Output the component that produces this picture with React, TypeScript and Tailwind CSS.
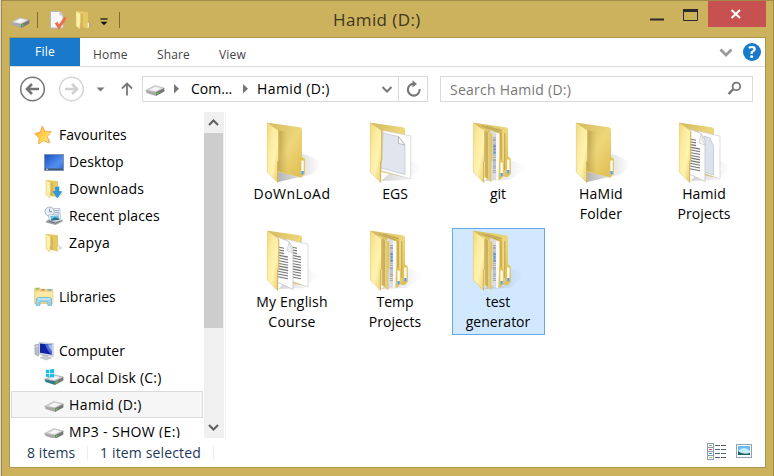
import React from "react";

type FolderKind = "single" | "page" | "nested" | "mixed" | "docs";

function Drive({ windows = false, className = "" }: { windows?: boolean; className?: string }) {
  return (
    <svg viewBox="0 0 20 20" className={`h-5 w-5 shrink-0 ${className}`}>
      <path d="M.6 11.3 L10 6.6 L19.4 9 L11 13.2 Z" fill={windows ? "#b9c9cc" : "#d6d6d4"} stroke="#a5a5a3" strokeWidth=".5" />
      <path d="M.6 11.3 L11 13.2 V17 L1.5 14 Z" fill={windows ? "#357c8b" : "#aaa9a7"} />
      <path d="M11 13.2 L19.4 9 V12.4 L11 17 Z" fill="#777" />
      <path d="M4.5 10.9 L10.5 7.8 L16 9.2 L10.3 12 Z" fill="#f6f6f6" />
      <path d="M11.8 14 l1.8 -.9 v1.7 l-1.8 .9z" fill="#4fd03c" />
      {windows && (
        <path d="M2 2 L5.3 1.6 V5 H2 Z M6 1.5 L10 1 V5 H6 Z M2 5.7 H5.3 V9 L2 8.7 Z M6 5.7 H10 V9.5 L6 9.1 Z" fill="#14bff0" />
      )}
    </svg>
  );
}

function SmallFolder({ download = false }: { download?: boolean }) {
  return (
    <svg viewBox="0 0 20 20" className="h-5 w-5 shrink-0">
      <path d="M14 12 L19 15 L13 18 Z" fill="#999" opacity=".35" />
      <path d="M3 1 L13 2 Q14 2 14 3 V12 L15 12.5 V17 L13.5 18.5 L6 16.5 Z" fill="#e5c864" />
      <path d="M6.5 3.5 L9 4 V17.4 L6 16.5 Z" fill="#b99c46" opacity=".4" />
      <path d="M2 1 L6.5 3.5 V13 L6 13.5 V19 L2 16 Z" fill="#fdeea8" stroke="#dfc169" strokeWidth=".5" />
      {download ? (
        <path d="M11.5 8 H15 V12.5 H17.8 L13.4 19 L9 12.5 H11.5 Z" fill="#2d9ddf" stroke="#1680c5" strokeWidth=".5" />
      ) : (
        <path d="M13.7 13 h1 v4.5 h-1z" fill="#fff" />
      )}
    </svg>
  );
}

function StarIcon() {
  return (
    <svg viewBox="0 0 20 20" className="h-5 w-5 shrink-0">
      <defs>
        <linearGradient id="star" x1="0" y1="0" x2="1" y2="1">
          <stop offset="0" stopColor="#ffa550" />
          <stop offset=".5" stopColor="#ffd048" />
          <stop offset="1" stopColor="#fff08a" />
        </linearGradient>
      </defs>
      <path d="M10 17 L17 18 L15 13 Z" fill="#999" opacity=".4" />
      <path d="M8.2 1 L11 6.2 L17.2 6.8 L13.4 11.5 L15.2 18 L9.6 15.6 L4.6 19 L5 13.2 L.8 8.5 L6.4 7 Z" fill="url(#star)" stroke="#f09a40" strokeWidth=".7" strokeLinejoin="round" />
    </svg>
  );
}

function DesktopIcon() {
  return (
    <svg viewBox="0 0 20 20" className="h-5 w-5 shrink-0">
      <defs>
        <linearGradient id="desk" x1="0" y1="0" x2="1" y2="1">
          <stop offset="0" stopColor="#1550bd" />
          <stop offset=".65" stopColor="#568ff0" />
          <stop offset="1" stopColor="#2968d8" />
        </linearGradient>
      </defs>
      <rect x=".5" y="2.5" width="19" height="16" fill="url(#desk)" stroke="#7f93ad" />
      <path d="M1 16.5h18v1.5H1z" fill="#45566f" />
      <path d="M2 16.8h2v.9H2z" fill="#a9e0ff" />
    </svg>
  );
}

function RecentIcon() {
  return (
    <svg viewBox="0 0 20 20" className="h-5 w-5 shrink-0">
      <path d="M9 2.5 H16 V9 H9 Z" fill="#eef2f7" stroke="#9aabbf" strokeWidth=".6" />
      <path d="M11 4.5h4M11 6.5h4" stroke="#8fa9c8" />
      <circle cx="5.6" cy="5.6" r="4.6" fill="#e8eff7" stroke="#a4b3c5" />
      <path d="M5.6 2.5 V5.8 H8" fill="none" stroke="#637b99" strokeWidth=".8" />
      <path d="M4.5 9 L16 8 L17 15 L5.5 16 Z" fill="#f9fbfc" stroke="#98a6b3" strokeWidth=".6" />
      <path d="M6.2 10 L15 9.2 V12 L6.8 14 Z" fill="#6cc0ea" />
      <path d="M7 13.4 L11 11.2 L15.4 12.5 V14 L7 14.8 Z" fill="#2c6f8a" />
      <path d="M2 15 L5 13.5 L12 16.5 L18.6 13.6 V15.5 L11.5 19 L2 16.6 Z" fill="#9aa1a8" />
      <path d="M4.5 15 L11.5 17.2 L16 15.2" fill="none" stroke="#60686f" strokeWidth=".8" />
    </svg>
  );
}

function LibrariesIcon() {
  return (
    <svg viewBox="0 0 20 20" className="h-5 w-5 shrink-0">
      <path d="M.8 2 Q.8 1 2 1 H6 V2.4 H18.6 V16.5 H.8 Z" fill="#f1d885" stroke="#d3b35c" strokeWidth=".6" />
      <path d="M2 2h2.5" stroke="#42ad50" /><path d="M7.5 3h3" stroke="#ee5b4c" strokeWidth="1.3" /><path d="M13.5 3h4" stroke="#53a5da" strokeWidth="1.3" />
      <path d="M.8 5.2 L2 4.3 H19 V16.5 H.8 Z" fill="#fbe8a3" stroke="#e1c673" strokeWidth=".5" />
      <path d="M2.2 18.4 V13 Q2.2 10.5 5 10.5 H15 Q17.5 10.5 17.5 12.5 V18.4 H13.8 V14.8 H6 V18.4 Z" fill="#9bd5ef" stroke="#60add4" strokeWidth=".7" />
      <path d="M4 12 H16" stroke="#d9f4fc" />
    </svg>
  );
}

function ComputerIcon() {
  return (
    <svg viewBox="0 0 20 20" className="h-5 w-5 shrink-0">
      <path d="M.8 4 L4.5 3 V15 L1 13.5 Z" fill="#b9c0c6" stroke="#858d95" strokeWidth=".5" />
      <path d="M1.8 5.5 L3.8 5" stroke="#fff" strokeWidth=".8" />
      <path d="M8 13 L14 14 V16 L18 17 L12 19 L6 16.7 L9 15.7 Z" fill="#c8cbcf" stroke="#a5a9ad" strokeWidth=".4" />
      <path d="M5 1.5 L19.3 2.6 V15.5 L5 13 Z" fill="#dce1e8" stroke="#a4adbb" strokeWidth=".6" />
      <path d="M6 2.6 L18 3.7 V13.8 L6 11.7 Z" fill="#1222a6" />
      <path d="M11 3.1 L18 3.7 V13.8 Q13 10 11 3.1 Z" fill="#4a6dd6" />
      <path d="M14 3.4 L18 3.7 V10 Q15 8 14 3.4 Z" fill="#9db6f0" />
    </svg>
  );
}

function TextLines({ x }: { x: number }) {
  return (
    <g stroke="#757575" strokeWidth="1.1">
      {Array.from({ length: 12 }, (_, i) => (
        <path key={i} d={`M${x} ${19 + i * 2.7} l${i < 3 ? 6 : 10} ${i < 3 ? 1.2 : 2}`} />
      ))}
    </g>
  );
}

function LabelTab({ x, y }: { x: number; y: number }) {
  return (
    <g transform={`translate(${x} ${y})`}>
      <path d="M-1 -2.5 L3.4 0 V14.5 L0 18.5 H-2 Z" fill="#e3c257" />
      <path d="M.2 1.5 H2.5 V14.5 L.2 16 Z" fill="#fff" />
      <path d="M.2 12 H2.5 V14.8 L.2 16 Z" fill="#559deb" />
    </g>
  );
}

function BigFolder({ kind }: { kind: FolderKind }) {
  const nested = kind === "nested";
  const paper = kind !== "single" && !nested;
  return (
    <svg viewBox="0 0 64 64" className="h-16 w-16 shrink-0">
      <defs>
        <linearGradient id="flap" x1="0" y1="0" x2="1" y2="1">
          <stop offset="0" stopColor="#eed87c" />
          <stop offset=".3" stopColor="#fbeb9f" />
          <stop offset=".6" stopColor="#fff3b0" />
          <stop offset="1" stopColor="#e6c763" />
        </linearGradient>
        <linearGradient id="flap2" x1="0" y1="0" x2="1" y2="0">
          <stop offset="0" stopColor="#b9a04d" />
          <stop offset=".45" stopColor="#f3e08e" />
          <stop offset="1" stopColor="#dcc062" />
        </linearGradient>
        <linearGradient id="back" x1="0" y1="0" x2="1" y2="1">
          <stop offset="0" stopColor="#d3b95c" />
          <stop offset=".5" stopColor="#eed67a" />
          <stop offset="1" stopColor="#debb4b" />
        </linearGradient>
        <linearGradient id="inner">
          <stop offset="0" stopColor="#9e8237" stopOpacity=".55" />
          <stop offset="1" stopColor="#b89b43" stopOpacity="0" />
        </linearGradient>
        <linearGradient id="shade">
          <stop offset="0" stopColor="#777" stopOpacity=".55" />
          <stop offset="1" stopColor="#999" stopOpacity="0" />
        </linearGradient>
      </defs>
      <path d={kind === "single" ? "M42 34 Q52 36 62 43 Q57 54 45 56 L18 62 V51 Z" : "M42 40 Q54 42 59 48 L44 60 L18 61 Z"} fill="url(#shade)" opacity={kind === "single" ? 1 : 0.6} />
      <path d="M8 2.8 L39.5 7.2 Q42 7.6 42 9.5 V36.7 L44.7 39 V54 L41.3 57.3 L18 52 Z" fill="url(#back)" />
      {kind === "single" && (
        <>
          <path d="M18 10 L28 12 V54 L18 51 Z" fill="url(#inner)" />
          <LabelTab x={41.2} y={39} />
        </>
      )}
      {nested && (
        <>
          <path d="M14 5 L35.5 9 V57 L18 55 Z" fill="#d8bf63" />
          <path d="M16 6 L33 12 M20 6 L36 11" stroke="#a99043" strokeWidth=".6" />
          <path d="M24 10 L30.5 12.5 V60 L24 57 Z" fill="#dcdddf" />
          <path d="M30 12.5 L33.7 13.5 V59 L30 60 Z" fill="#f8f8f8" />
          <path d="M28.4 17 V53" stroke="#8f98a4" strokeWidth="3" strokeDasharray="1.2 .9 2 .7 .8 1" opacity=".75" />
          <path d="M28.6 25 V35" stroke="#4d83b0" strokeWidth="2" strokeDasharray="2 1.3" opacity=".8" />
          <path d="M33.7 12 L36.3 13 V57 L33.7 59 Z" fill="#cfae4b" />
          <path d="M36.3 12.5 L38.5 13 V54 L36.3 56 Z" fill="#efd97f" />
          <path d="M38.7 13 V50" stroke="#ad9140" strokeWidth=".7" />
          <LabelTab x={34.3} y={41} />
          <LabelTab x={41} y={38} />
          <path d="M12 5 L26.3 14 V40 L25.3 42 V62.3 L17 56 Z" fill="url(#flap2)" />
          <path d="M19 10 L22 12.3 V59 L19 57 Z" fill="#a88c3b" opacity=".5" />
        </>
      )}
      {paper && (
        <>
          <path d={kind === "page" ? "M20 10.5 L47.8 16 V59 L18 50.5 Z" : "M26 11 L48 16.2 V59 L26 51 Z"} fill="#fff" stroke="#cfcfcf" strokeWidth=".7" />
          {kind === "page" && <path d="M20 13 L35.5 16.5 L42 25 V54.5 L18 48 Z" fill="#e0e5ee" stroke="#b7bcc7" strokeWidth=".6" />}
          {kind === "page" && <path d="M35.5 16.5 V23.5 L42 25 Z" fill="#fafafa" stroke="#999" strokeWidth=".6" />}
          {kind === "mixed" && <path d="M32 16 L38 18 L41.5 26 V55 L32 52 Z" fill="#dce3ed" stroke="#aeb6c5" strokeWidth=".6" />}
          {kind === "docs" && <TextLines x={31} />}
          {kind !== "page" && (
            <>
              <path d="M18 9 L29 13.5 L33 20 V61.5 L17 54 Z" fill="#fdfdfd" stroke="#bcbcbc" strokeWidth=".7" />
              <path d="M29 14 L27 23 L33 25 Z" fill="#f1f1f1" stroke="#bbb" strokeWidth=".5" />
              <TextLines x={18} />
            </>
          )}
        </>
      )}
      <path d="M7.3 2.7 L19 11 V40 L17.8 42 V62.7 L7.3 52 Z" fill="url(#flap)" stroke="#dec16b" strokeWidth=".5" />
      <path d="M18.6 11 V40 L17.5 42 V62" fill="none" stroke="#d1b052" strokeWidth=".8" />
    </svg>
  );
}

const places = [
  { label: "Favourites", icon: <StarIcon />, root: true, track: "" },
  { label: "Desktop", icon: <DesktopIcon />, track: "tracking-[0.1px]" },
  { label: "Downloads", icon: <SmallFolder download />, track: "tracking-[0.25px]" },
  { label: "Recent places", icon: <RecentIcon />, track: "tracking-[0.1px]" },
  { label: "Zapya", icon: <SmallFolder />, track: "tracking-[0.4px]" },
  null,
  { label: "Libraries", icon: <LibrariesIcon />, root: true, track: "" },
  null,
  { label: "Computer", icon: <ComputerIcon />, root: true, track: "" },
  { label: "Local Disk (C:)", icon: <Drive windows />, track: "tracking-[0.2px]" },
  { label: "Hamid (D:)", icon: <Drive />, selected: true, track: "tracking-[0.4px]" },
  { label: "MP3 - SHOW (E:)", icon: <Drive />, track: "tracking-[0.35px]" },
];

const folders: { lines: string[]; kind: FolderKind; selected?: boolean; track?: string }[] = [
  { lines: ["DoWnLoAd"], kind: "single", track: "tracking-[0.45px]" },
  { lines: ["EGS"], kind: "page" },
  { lines: ["git"], kind: "nested" },
  { lines: ["HaMid", "Folder"], kind: "single", track: "tracking-[0.2px]" },
  { lines: ["Hamid", "Projects"], kind: "mixed", track: "tracking-[0.1px]" },
  { lines: ["My English", "Course"], kind: "docs", track: "tracking-[0.2px]" },
  { lines: ["Temp", "Projects"], kind: "nested" },
  { lines: ["test", "generator"], kind: "nested", selected: true },
];

function TitleBar() {
  return (
    <header className="relative flex h-[37px] shrink-0 justify-between">
      <div className="flex h-full items-center pl-px">
        <Drive className="mt-0.5" />
        <i className="ml-[7px] h-4 w-px bg-[#806b31]" />
        <svg viewBox="0 0 20 20" className="ml-[10px] h-5 w-5">
          <path d="M2.5 1.5 H12 L15 5 V18 H2.5 Z" fill="#f8f8f8" stroke="#b3b7bc" />
          <path d="M12 1.5 V5 H15" fill="#ddd" stroke="#aaa" strokeWidth=".7" />
          <path d="M8 12.5 L11 17 L17.5 7.5" fill="none" stroke="#ed7048" strokeWidth="3" />
        </svg>
        <div className="ml-[6px]"><SmallFolder /></div>
        <svg viewBox="0 0 8 8" className="ml-[6px] mt-1 h-2 w-2"><path d="M.5 1h7" stroke="#111" strokeWidth="1.2" /><path d="M.5 3.7h7L4 7.3Z" fill="#111" /></svg>
        <i className="ml-[11px] h-4 w-px bg-[#806b31]" />
      </div>
      <h1 className="absolute left-[324px] top-[6px] whitespace-nowrap text-[17px] leading-[26px] tracking-[0.4px] text-[#3c3621]">Hamid (D:)</h1>
      <div className="flex">
        <svg viewBox="0 0 60 26" className="mr-[-1px] h-[26px] w-[60px]">
          <path d="M1 17.5h14v2H1z" fill="#2b2b2b" />
          <path d="M34.5 8.5h14v11h-14z" fill="none" stroke="#2b2b2b" />
          <path d="M34 8h15v3H34z" fill="#2b2b2b" />
        </svg>
        <button className="grid h-[26px] w-[58px] place-items-center bg-[#c75050]">
          <svg viewBox="0 0 12 10" className="mr-[2px] h-2.5 w-3"><path d="M1.5 1 L10 9 M10 1 L1.5 9" stroke="#fff" strokeWidth="2.1" /></svg>
        </button>
      </div>
    </header>
  );
}

function MenuBar() {
  return (
    <nav className="flex h-[29px] shrink-0 border-b border-[#dadbdc] text-[12px] leading-[33px] text-[#444]">
      <button className="h-7 w-[70px] bg-[#1979ca] leading-[28px] tracking-[0.2px] text-white">File</button>
      <span className="ml-[13px] w-16 tracking-[0.2px]">Home</span>
      <span className="w-[62px] tracking-[0.15px]">Share</span>
      <span className="tracking-[0.2px]">View</span>
      <div className="ml-auto flex items-center pr-[4px]">
        <svg viewBox="0 0 14 10" className="mr-2.5 mt-px h-2.5 w-3.5"><path d="M1.5 1.5 L7 7 L12.5 1.5" fill="none" stroke="#999" strokeWidth="2.7" /></svg>
        <span className="grid h-[18px] w-[18px] place-items-center rounded-full bg-[#1979ca] text-[16px] font-bold leading-[18px] text-white">?</span>
      </div>
    </nav>
  );
}

function Toolbar() {
  return (
    <div className="flex h-[45px] shrink-0 items-start pl-[9px] pt-[9px]">
      <svg viewBox="0 0 122 28" className="h-7 w-[122px] shrink-0" fill="none">
        <circle cx="13.5" cy="13" r="11.8" stroke="#777" strokeWidth="1.5" />
        <path d="M20 13H8.5M13 8L8 13l5 5" stroke="#747474" strokeWidth="2.6" />
        <circle cx="52.5" cy="13" r="11.8" stroke="#d6d6d6" strokeWidth="1.5" />
        <path d="M46 13H57.5M53 8l5 5-5 5" stroke="#d0d0d0" strokeWidth="2.6" />
        <path d="M77.5 11.5h8L81.5 15.5z" fill="#777" />
        <path d="M108 19.5V8M103 12.5L108 7.5l5 5" stroke="#777" strokeWidth="1.8" />
      </svg>
      <div className="ml-px flex h-[26px] w-[286px] border border-[#d9d9d9] text-[14px] leading-[24px] text-black">
        <Drive className="ml-[2px] mt-0.5" />
        <svg viewBox="0 0 6 10" className="ml-[9px] mt-[7px] h-2.5 w-1.5"><path d="M0 0L5 4.7L0 9.4Z" fill="#777" /></svg>
        <span className="ml-[11px] w-[52px] whitespace-nowrap">Com...</span>
        <svg viewBox="0 0 6 10" className="mt-[7px] h-2.5 w-1.5"><path d="M0 0L5 4.7L0 9.4Z" fill="#777" /></svg>
        <span className="ml-[8px] whitespace-nowrap tracking-[0.4px]">Hamid (D:)</span>
        <svg viewBox="0 0 12 8" className="ml-auto mr-[5px] mt-[9px] h-2 w-3"><path d="M1.5 1L6 5.5L10.5 1" fill="none" stroke="#777" strokeWidth="2" /></svg>
        <div className="grid w-[29px] place-items-center border-l border-[#d9d9d9]">
          <svg viewBox="0 0 18 18" className="h-[18px] w-[18px]"><path d="M15.6 9A5.9 5.9 0 1 1 9 3.9" fill="none" stroke="#777" strokeWidth="2.1" /><path d="M8.5 .3L13 3.9L8.5 7.5Z" fill="#777" /></svg>
        </div>
      </div>
      <div className="ml-3 flex h-[26px] w-[313px] items-center justify-between border border-[#d9d9d9] pl-[9px] pr-[10px] text-[14px] text-[#777]">
        <span className="tracking-[0.25px]">Search Hamid (D:)</span>
        <svg viewBox="0 0 15 15" className="mt-[-1px] h-[15px] w-[15px]"><circle cx="9.4" cy="5.4" r="3.8" fill="none" stroke="#777" strokeWidth="1.8" /><path d="M6.5 8L1.5 13" stroke="#777" strokeWidth="2.4" /></svg>
      </div>
    </div>
  );
}

function Sidebar() {
  return (
    <aside className="flex h-full w-[216px] shrink-0 border-r border-[#f3f3f3]">
      <ul className="h-full w-[194px] overflow-hidden pl-px pt-[9px]">
        {places.map((place, i) =>
          place ? (
            <li key={i} className={`flex h-[27px] w-[192px] items-center gap-[5px] border text-[14px] ${place.root ? "pl-[22px]" : "pl-[32px]"} ${place.selected ? "border-[#dadada] bg-[#f6f6f6]" : "border-transparent"}`}>
              {place.icon}
              <span className={`whitespace-nowrap leading-5 ${place.track}`}>{place.label}</span>
            </li>
          ) : (
            <li key={i} className="h-[27px]" />
          )
        )}
      </ul>
      <div className="flex h-full w-5 flex-col items-center bg-[#f0f0f0]">
        <svg viewBox="0 0 20 21" className="h-[21px] w-5"><path d="M5 13L9.5 8.5L14 13" fill="none" stroke="#606060" strokeWidth="2" /></svg>
        <i className="mr-px h-[195px] w-[19px] bg-[#cdcdcd]" />
        <svg viewBox="0 0 20 21" className="mt-auto h-[21px] w-5"><path d="M5 8L9.5 12.5L14 8" fill="none" stroke="#606060" strokeWidth="2" /></svg>
      </div>
    </aside>
  );
}

export default function App() {
  return (
    <div className="h-[476px] w-[774px] overflow-hidden bg-[#d8d8d8] pl-px font-['Open_Sans','Noto_Sans',sans-serif]">
      <div className="flex h-full flex-col border-x border-t border-[#a28b48] bg-[#cdb25e] px-[7px] pb-2">
        <TitleBar />
        <main className="mt-[-1px] flex min-h-0 flex-1 flex-col border border-[#ad964b] bg-white">
          <MenuBar />
          <Toolbar />
          <div className="flex h-[326px] shrink-0">
            <Sidebar />
            <div className="grid h-[215px] grid-cols-[repeat(5,93px)] grid-rows-[107px_107px] gap-x-[10px] gap-y-px pl-[20px] pt-2">
              {folders.map((folder) => (
                <article key={folder.lines.join()} className={`flex flex-col items-center border pr-px text-center text-[14px] leading-5 ${folder.selected ? "border-[#66a7e8] bg-[#d1e8ff]" : "border-transparent"}`}>
                  <div className="mt-[-1px]"><BigFolder kind={folder.kind} /></div>
                  {folder.lines.map((line) => <span key={line} className={`whitespace-nowrap ${folder.track ?? ""}`}>{line}</span>)}
                </article>
              ))}
            </div>
          </div>
          <footer className="flex flex-1 items-center pl-[17px] pr-[11px] text-[14px] text-[#1e395b]">
            <span className="w-[60px] tracking-[0.1px]">8 items</span>
            <i className="h-3.5 w-px bg-[#ededed]" />
            <span className="ml-[12px] w-[113px] whitespace-nowrap tracking-[0.15px]">1 item selected</span>
            <i className="h-3.5 w-px bg-[#ededed]" />
            <svg viewBox="0 0 48 20" className="mb-[3px] ml-auto h-5 w-12">
              <g fill="#fff" stroke="#8b99ab">
                <rect x="1.5" y="2.5" width="6" height="4" /><rect x="1.5" y="6.5" width="6" height="4" /><rect x="1.5" y="10.5" width="6" height="4" /><rect x="1.5" y="14.5" width="6" height="4" />
              </g>
              <path d="M3 4.5h3" stroke="#74a77b" /><path d="M3 8.5h3" stroke="#e04646" /><path d="M3 12.5h3" stroke="#4787db" /><path d="M3 16.5h3" stroke="#8fcd45" />
              <path d="M9 4.5h5m1 0h5M9 8.5h5m1 0h5M9 12.5h5m1 0h5M9 16.5h5m1 0h5" stroke="#52627a" />
              <rect x="30.5" y="3.5" width="15" height="13" fill="#fff" stroke="#91a2b6" />
              <path d="M32 5h12v9H32z" fill="#69bbee" /><path d="M32 10q6-6 12 0v4H32z" fill="#c5edfa" /><path d="M32 10q4 4 12 2v2H32z" fill="#1c655e" />
            </svg>
          </footer>
        </main>
      </div>
    </div>
  );
}
